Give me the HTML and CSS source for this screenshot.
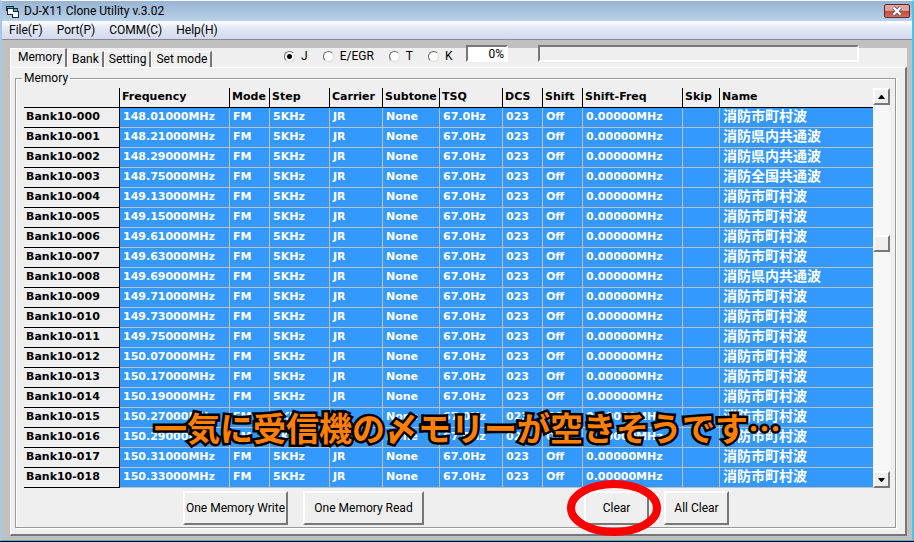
FILE: index.html
```html
<!DOCTYPE html>
<html lang="ja">
  <head>
    <meta charset="UTF-8" />
    <meta name="viewport" content="width=device-width, initial-scale=1.0" />
    <title>DJ-X11 Clone Utility v.3.02</title>
    <link rel="stylesheet" href="styles.css">
  </head>
  <body>
    <div class="window">
      <header class="titlebar">
        <svg class="app-icon" viewBox="0 0 13 13" aria-hidden="true">
          <path d="M0 1h8v2h4v3h1v7H6V10H1V6H0z" fill="#223" />
          <path d="M2 4h5v5H2z" fill="#fff" />
          <path d="M1 2h6v1H1z" fill="#2cc" />
          <path d="M7 7h5v5H7z" fill="#fff" />
          <path d="M8 4h3v2H8z" fill="#2cc" />
        </svg>
        <h1 class="title">DJ-X11 Clone Utility v.3.02</h1>
        <button type="button" class="close" aria-label="Close">
          <svg viewBox="0 0 12 10" aria-hidden="true">
            <path d="M2.500 1.500L9.500 8.500M9.500 1.500L2.500 8.500" stroke="#54586a" stroke-width="4" />
            <path d="M2.500 1.500L9.500 8.500M9.500 1.500L2.500 8.500" stroke="#fff" stroke-width="2.400" />
          </svg>
        </button>
      </header>

      <nav class="menubar">
        <a href="#">File(F)</a>
        <a href="#">Port(P)</a>
        <a href="#">COMM(C)</a>
        <a href="#">Help(H)</a>
      </nav>

      <main class="client">
        <div class="toolbar">
          <div class="tabs">
            <button type="button" class="tab active">Memory</button>
            <button type="button" class="tab">Bank</button>
            <button type="button" class="tab">Setting</button>
            <button type="button" class="tab">Set mode</button>
          </div>
          <div class="regions">
            <label><input type="radio" name="region" checked />J</label>
            <label><input type="radio" name="region" />E/EGR</label>
            <label><input type="radio" name="region" />T</label>
            <label><input type="radio" name="region" />K</label>
          </div>
          <input type="text" class="percent" value="0%" aria-label="Progress" readonly />
          <div class="progress"></div>
        </div>

        <section class="panel">
          <fieldset class="group">
            <legend>Memory</legend>

            <div class="grid">
              <table class="memory">
                <colgroup>
                  <col class="w-bank" />
                  <col class="w-freq" />
                  <col class="w-mode" />
                  <col class="w-step" />
                  <col class="w-carrier" />
                  <col class="w-subtone" />
                  <col class="w-tsq" />
                  <col class="w-dcs" />
                  <col class="w-shift" />
                  <col class="w-shiftfreq" />
                  <col class="w-skip" />
                  <col />
                </colgroup>
                <thead>
                  <tr>
                    <th></th>
                    <th>Frequency</th>
                    <th>Mode</th>
                    <th>Step</th>
                    <th>Carrier</th>
                    <th>Subtone</th>
                    <th>TSQ</th>
                    <th>DCS</th>
                    <th>Shift</th>
                    <th>Shift-Freq</th>
                    <th>Skip</th>
                    <th>Name</th>
                  </tr>
                </thead>
                <tbody id="memoryRows"></tbody>
              </table>

              <div class="scrollbar">
                <button type="button" class="arrow" aria-label="Scroll up">
                  <svg viewBox="0 0 7 4" aria-hidden="true"><path d="M3 0h1l3 4H0z" /></svg>
                </button>
                <div class="track"><div class="thumb"></div></div>
                <button type="button" class="arrow" aria-label="Scroll down">
                  <svg viewBox="0 0 7 4" aria-hidden="true"><path d="M0 0h7L4 4H3z" /></svg>
                </button>
              </div>

              <p class="caption">一気に受信機の〆モリーが空きそうです…</p>
            </div>

            <div class="actions">
              <button type="button" class="btn">One Memory Write</button>
              <button type="button" class="btn wide">One Memory Read</button>
              <div class="marked">
                <button type="button" class="btn small">Clear</button>
                <svg class="ring" viewBox="0 0 96 58" aria-hidden="true">
                  <ellipse cx="48" cy="29" rx="43" ry="24" />
                </svg>
              </div>
              <button type="button" class="btn small">All Clear</button>
            </div>
          </fieldset>
        </section>
      </main>
    </div>

    <script src="script.js"></script>
  </body>
</html>
```

FILE: styles.css
```css
* {
  box-sizing: border-box;
  margin: 0;
  padding: 0;
}

body {
  font-family: Roboto, "Noto Sans CJK JP", sans-serif;
  font-size: 12px;
  line-height: 16px;
  color: #000;
  background-color: #000;
}

button,
input {
  font: inherit;
  color: inherit;
}

.window {
  display: flex;
  flex-direction: column;
  min-height: calc(100vh - 2px);
  border: 2px solid #a9c8e6;
  border-top: 1px solid #f4f8fc;
  border-right-color: #4cc4e4;
  border-bottom: 1px solid #3cb8d8;
  background-color: #c0c0c0;
}

/* title bar */
.titlebar {
  display: flex;
  align-items: center;
  height: 20px;
  padding: 0 2px 0 4px;
  background: linear-gradient(#98b4d2, #b9d1ea);
}

.app-icon {
  width: 13px;
  height: 13px;
  margin-right: 5px;
}

.title {
  flex: 1;
  font-size: 12px;
  font-weight: normal;
}

.close {
  display: flex;
  align-items: center;
  justify-content: center;
  width: 26px;
  height: 14px;
  border: 1px solid #5a2a30;
  border-radius: 2px;
  background: linear-gradient(#e0a59a 45%, #c0493a 50%, #d2705c);
}

.close svg {
  width: 12px;
  height: 10px;
}

/* menu */
.menubar {
  display: flex;
  gap: 14px;
  height: 19px;
  padding: 1px 7px;
  border-bottom: 1px solid #8a8a94;
  background: linear-gradient(#fff, #e4e8f5 40%, #d4daee);
}

.menubar a {
  color: #000;
  text-decoration: none;
}

/* tabs and radios */
.client {
  display: flex;
  flex: 1;
  flex-direction: column;
  padding: 5px 5px 4px 8px;
}

.toolbar {
  display: flex;
  align-items: center;
  height: 22px;
  background: linear-gradient(#c0c0c0 3px, #efefef 3px);
}

.tabs {
  display: flex;
  align-items: flex-end;
  align-self: flex-end;
  width: 274px;
}

.tab {
  height: 16px;
  padding: 0 3px 0 4px;
  border: solid;
  border-width: 1px 2px 0 1px;
  border-color: #fff #777 #fff #fff;
  background-color: #efefef;
  line-height: 15px;
}

.tab.active {
  height: 19px;
  padding: 0 3px 2px 7px;
}

.regions {
  display: flex;
  gap: 15px;
  width: 182px;
}

.regions label {
  display: flex;
  align-items: center;
  gap: 6px;
}

.regions input {
  appearance: none;
  width: 11px;
  height: 11px;
  border: 1px solid;
  border-color: #666 #ddd #ddd #666;
  border-radius: 50%;
  background-color: #fff;
}

.regions input:checked {
  background: radial-gradient(circle, #000 2px, #fff 3px);
}

.percent,
.progress {
  align-self: flex-start;
  height: 17px;
  border: 2px solid;
  border-color: #777 #fff #fff #777;
}

.percent {
  width: 42px;
  padding: 0 2px;
  background-color: #fff;
  line-height: 13px;
  text-align: right;
}

.progress {
  flex: 1;
  margin: 0 48px 0 30px;
  background-color: #efefef;
}

/* memory group */
.panel {
  flex: 1;
  padding: 2px 9px 6px 4px;
  border: 1px solid #fff;
  border-right: 2px solid #777;
  border-bottom: 2px solid #777;
  background-color: #efefef;
}

.group {
  padding: 2px 5px 2px 8px;
  border: 1px solid #999;
  box-shadow: 1px 1px #fff, inset 1px 1px #fff;
}

.group legend {
  padding: 0 2px;
  margin-left: -2px;
}

.grid {
  position: relative;
  display: flex;
}

.memory {
  flex: 1;
  width: 0;
  table-layout: fixed;
  border-collapse: separate;
  border-spacing: 0;
  font-family: "DejaVu Sans", "Noto Sans CJK JP", sans-serif;
  font-size: 11px;
  font-weight: bold;
  text-align: left;
}

.memory th,
.memory td {
  height: 20px;
  padding: 0 0 2px 3px;
  border-right: 1px solid #c0c0c0;
  border-bottom: 1px solid #c0c0c0;
  line-height: 17px;
  overflow: hidden;
  white-space: nowrap;
}

.memory th {
  padding-left: 2px;
  border-color: #000;
  background-color: #efefef;
}

.memory td {
  color: #fff;
  background-color: #3399ff;
}

.memory th:last-child,
.memory td:last-child {
  border-right: none;
}

.memory td:last-child {
  font-size: 14px;
}

.w-bank { width: 96px; }
.w-freq { width: 110px; }
.w-mode { width: 40px; }
.w-step { width: 60px; }
.w-carrier { width: 53px; }
.w-subtone { width: 57px; }
.w-tsq { width: 63px; }
.w-dcs { width: 40px; }
.w-shift { width: 40px; }
.w-shiftfreq { width: 100px; }
.w-skip { width: 37px; }

.scrollbar {
  display: flex;
  flex-direction: column;
  width: 17px;
}

.arrow,
.thumb {
  height: 17px;
  border: 2px solid;
  border-color: #fff #777 #777 #fff;
  background-color: #efefef;
}

.arrow svg {
  display: block;
  width: 7px;
  height: 4px;
  margin: auto;
}

.track {
  flex: 1;
  background-color: #f7f7f7;
}

.thumb {
  margin-top: 130px;
}

.caption {
  position: absolute;
  left: 130px;
  bottom: 37px;
  color: #ff8000;
  font-family: "Noto Sans CJK JP", sans-serif;
  font-size: 33px;
  font-weight: bold;
  line-height: 48px;
  white-space: nowrap;
  -webkit-text-stroke: 5px #000;
  paint-order: stroke fill;
}

/* buttons under the table */
.actions {
  display: flex;
  gap: 15px;
  padding: 3px 0 0 159px;
}

.btn {
  width: 105px;
  height: 34px;
  border: 2px solid;
  border-color: #fff #777 #777 #fff;
  background-color: #efefef;
  white-space: nowrap;
}

.btn.wide {
  width: 121px;
}

.btn.small {
  width: 65px;
}

.marked {
  position: relative;
  margin-left: 145px;
}

.ring {
  position: absolute;
  top: -12px;
  left: -18px;
  width: 96px;
  height: 58px;
  fill: none;
  stroke: #f00;
  stroke-width: 8px;
  pointer-events: none;
}
```

FILE: script.js
```js
const CITY = "消防市町村波";
const PREF = "消防県内共通波";
const NATION = "消防全国共通波";

const memories = [
  ["148.01000", CITY],
  ["148.21000", PREF],
  ["148.29000", PREF],
  ["148.75000", NATION],
  ["149.13000", CITY],
  ["149.15000", CITY],
  ["149.61000", CITY],
  ["149.63000", CITY],
  ["149.69000", PREF],
  ["149.71000", CITY],
  ["149.73000", CITY],
  ["149.75000", CITY],
  ["150.07000", CITY],
  ["150.17000", CITY],
  ["150.19000", CITY],
  ["150.27000", CITY],
  ["150.29000", CITY],
  ["150.31000", CITY],
  ["150.33000", CITY],
];

const body = document.querySelector("#memoryRows");

memories.forEach(([freq, name], i) => {
  const row = document.createElement("tr");

  const head = document.createElement("th");
  head.scope = "row";
  head.innerText = "Bank10-" + String(i).padStart(3, "0");
  row.appendChild(head);

  const cells = [
    freq + "MHz",
    "FM",
    "5KHz",
    "JR",
    "None",
    "67.0Hz",
    "023",
    "Off",
    "0.00000MHz",
    "",
    name,
  ];

  for (const text of cells) {
    const cell = document.createElement("td");
    cell.innerText = text;
    row.appendChild(cell);
  }

  body.appendChild(row);
});
```
